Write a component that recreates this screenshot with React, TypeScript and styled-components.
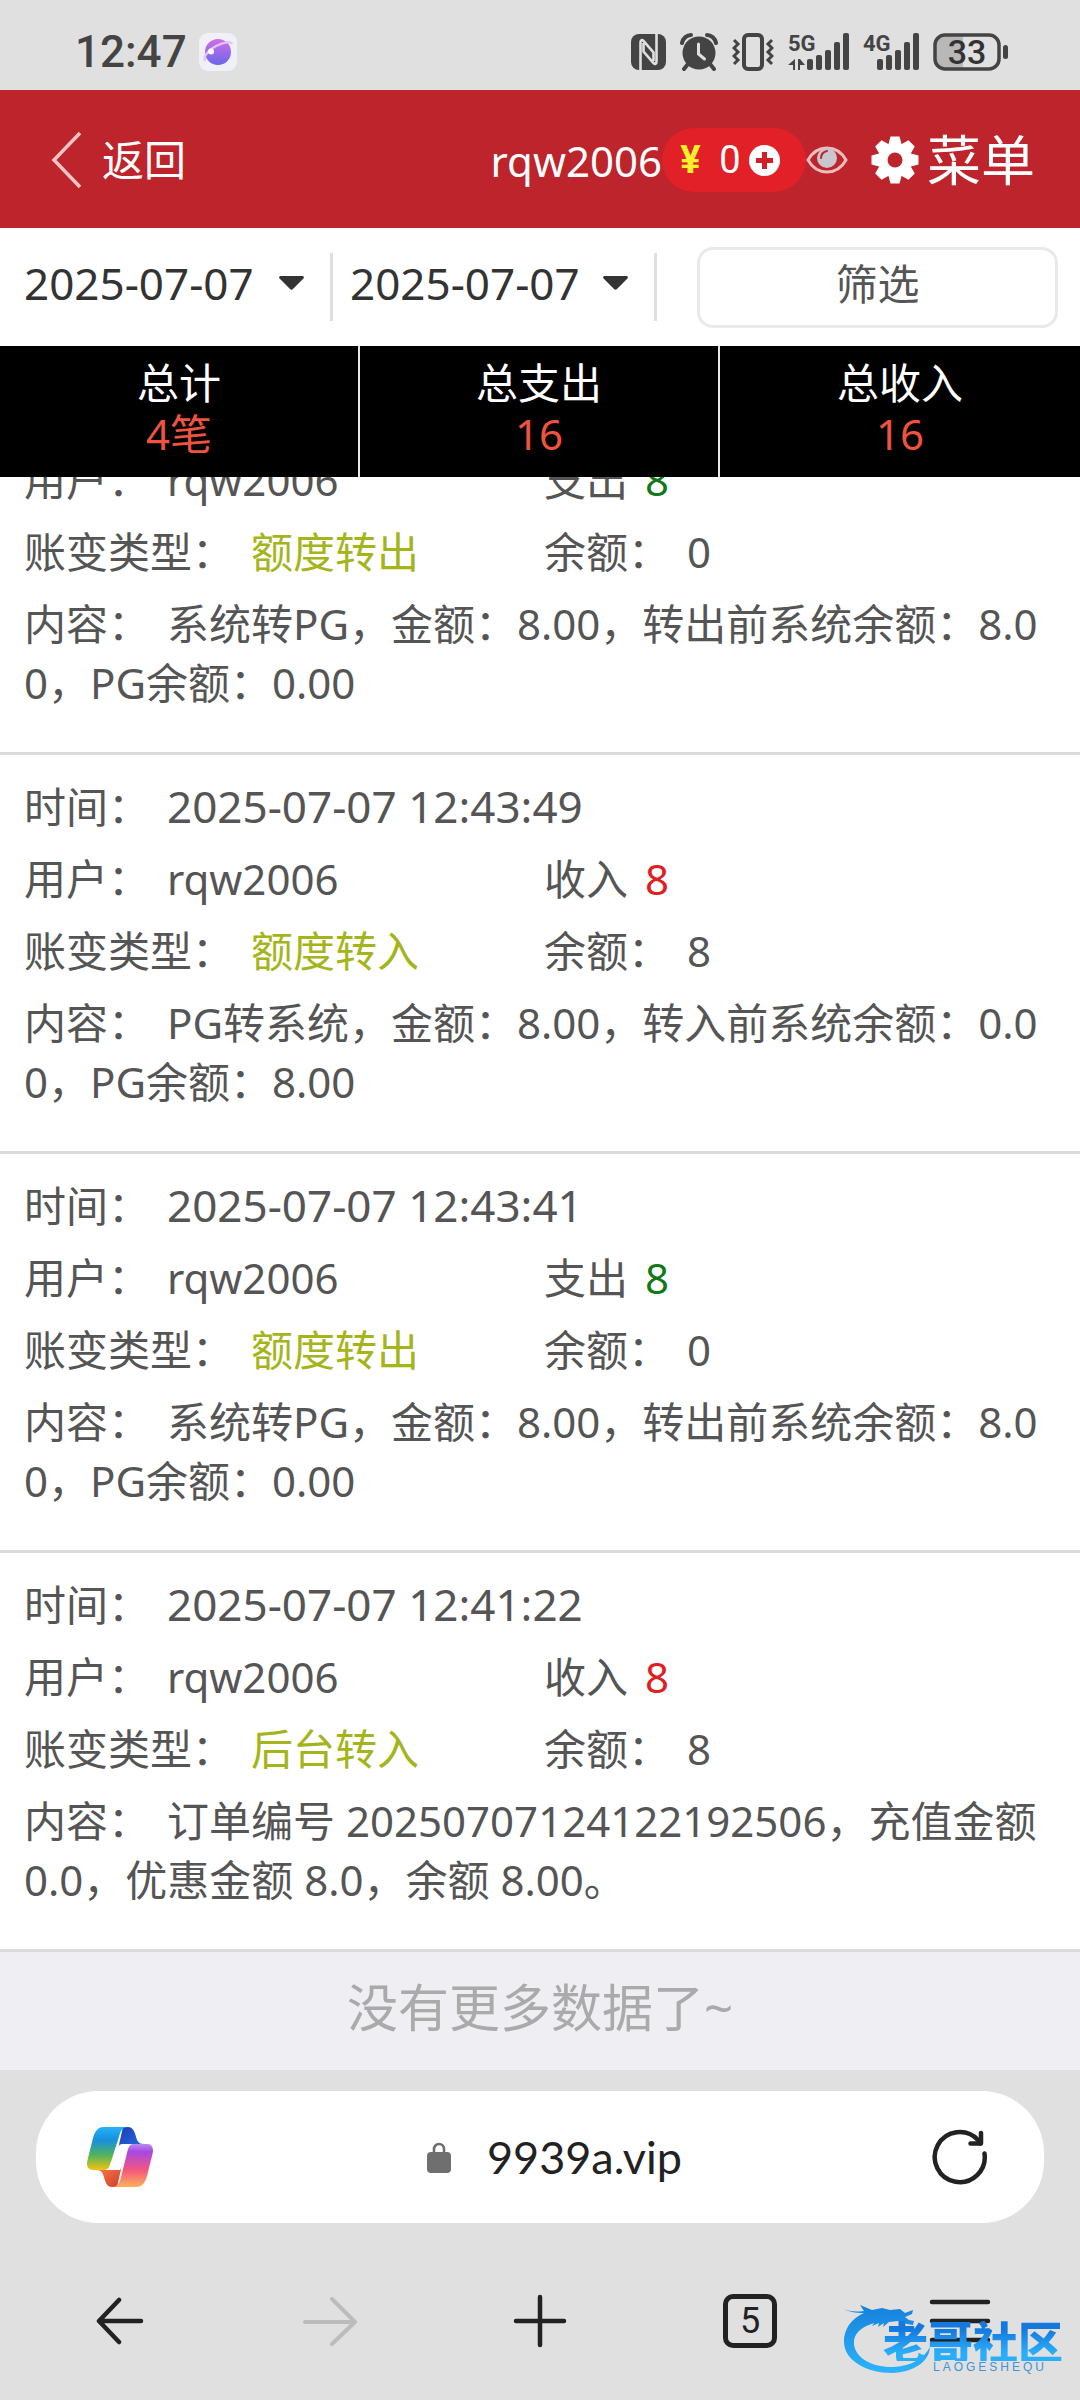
import React, { useLayoutEffect, useRef } from "react";
import styled, { createGlobalStyle } from "styled-components";

const GlobalStyle = createGlobalStyle`
  *, *::before, *::after { box-sizing: border-box; }
  body {
    margin: 0;
    background: #e0e0e0;
    font-family: "Noto Sans", "Noto Sans CJK SC", sans-serif;
    font-size: 42px;
    color: #555;
  }
  button, select, input { font: inherit; color: inherit; }
  button { border: 0; background: none; padding: 0; cursor: pointer; }
`;

const Shell = styled.div`
  display: flex;
  flex-direction: column;
  height: 100vh;
  overflow: hidden;
`;

/* ---------- system status bar ---------- */

const StatusBar = styled.div`
  display: flex;
  align-items: center;
  justify-content: space-between;
  flex: none;
  height: 90px;
  padding: 13px 71px 0 75px;
  color: #444;
  font-family: Roboto, sans-serif;
`;

const StatusGroup = styled.div<{ $gap: number }>`
  display: flex;
  align-items: center;
  gap: ${(p) => p.$gap}px;
`;

const Clock = styled.span`
  font-size: 44px;
  font-weight: 500;
  line-height: 48px;
`;

/* ---------- site header ---------- */

const Header = styled.header`
  display: flex;
  align-items: center;
  justify-content: space-between;
  flex: none;
  height: 138px;
  padding: 2px 45px 0 51px;
  background: #bd242b;
  color: #fff;
`;

const BackButton = styled.button`
  display: flex;
  align-items: center;
  gap: 20px;
  line-height: 60px;
`;

const Account = styled.div`
  display: flex;
  align-items: center;
`;

const Wallet = styled.button`
  display: flex;
  align-items: center;
  height: 64px;
  padding: 0 26px 0 8px;
  border-radius: 32px;
  background: #e12027;
  font-family: Roboto, sans-serif;
  font-size: 38px;
`;

const Yen = styled.span`
  width: 41px;
  color: #fff02e;
  font-weight: 700;
  text-align: center;
`;

const Balance = styled.span`
  width: 38px;
  text-align: center;
`;

const MenuButton = styled.button`
  display: flex;
  align-items: center;
  gap: 8px;
  margin-left: 23px;
  font-size: 54px;
  line-height: 64px;
`;

/* ---------- filters ---------- */

const Filters = styled.form`
  display: grid;
  grid-template-columns: 309fr 324fr 401fr;
  align-items: center;
  flex: none;
  height: 118px;
  padding: 0 22px 0 24px;
  background: #fff;
  color: #333;
`;

const DateField = styled.label<{ $inset: number }>`
  display: flex;
  align-items: center;
  height: 68px;
  padding: 0 26px 8px ${(p) => p.$inset}px;
  border-right: 3px solid #dfdfdf;
`;

const DateSelect = styled.select`
  flex: 1;
  min-width: 0;
  height: 60px;
  padding: 0;
  border: 0;
  background: transparent;
  appearance: none;
  font-size: 44px;
`;

const FilterButton = styled.button`
  height: 81px;
  margin-left: 40px;
  padding-bottom: 12px;
  border: 3px solid #e9e9e9;
  border-radius: 16px;
  background: #fff;
  color: #555;
`;

/* ---------- totals ---------- */

const Totals = styled.dl`
  display: grid;
  grid-template-columns: repeat(3, 1fr);
  flex: none;
  margin: 0;
  background: #000;
  text-align: center;
  line-height: 51px;
`;

const Total = styled.div`
  padding: 11px 0 18px;
  &:not(:last-child) { border-right: 2px solid #e8e8e8; }
`;

const TotalName = styled.dt`
  color: #fff;
`;

const TotalValue = styled.dd`
  margin: 0;
  color: #ee5340;
`;

/* ---------- records ---------- */

const ListArea = styled.main`
  flex: 1;
  min-height: 0;
  overflow-y: auto;
  scrollbar-width: none;
  background: #eeeef3;
  line-height: 59px;
`;

const Record = styled.article`
  display: flex;
  flex-direction: column;
  gap: 13px;
  padding: 22px 24px 40px;
  border-bottom: 3px solid #dcdcdc;
  background: #fff;
`;

const Row = styled.div`
  display: grid;
  grid-template-columns: 520fr 512fr;
`;

const Line = styled.div<{ $breakAll?: boolean }>`
  word-break: ${(p) => (p.$breakAll ? "break-all" : "normal")};
`;

const Label = styled.span`
  margin-right: 17px;
`;

const Stamp = styled.time`
  font-size: 44px;
`;

const Kind = styled.span`
  color: #a4b51c;
`;

const Amount = styled.span<{ $income: boolean }>`
  color: ${(p) => (p.$income ? "#e0201f" : "#12781a")};
`;

const EndNote = styled.p`
  margin: 0;
  padding: 25px 0 33px;
  color: #aaa;
  font-size: 51px;
  line-height: 60px;
  text-align: center;
`;

/* ---------- browser chrome ---------- */

const BrowserBar = styled.footer`
  position: relative;
  flex: none;
  padding: 21px 0 29px;
  background: #e0e0e0;
  color: #222;
`;

const AddressBar = styled.div`
  display: flex;
  align-items: center;
  justify-content: space-between;
  height: 132px;
  margin: 0 36px 48px;
  padding: 0 56px 0 51px;
  border-radius: 62px;
  background: #fff;
`;

const Address = styled.button`
  display: flex;
  align-items: center;
  gap: 36px;
  padding-left: 24px;
  font-family: Lato, sans-serif;
  font-size: 45px;
  line-height: 60px;
`;

const IconButton = styled.button`
  display: flex;
  align-items: center;
  justify-content: center;
  color: inherit;
  &:disabled { color: #bcbcbc; cursor: default; }
`;

const NavRow = styled.nav`
  display: grid;
  grid-template-columns: repeat(5, 1fr);
  height: 100px;
  padding: 0 15px;
`;

const TabCount = styled.span`
  display: flex;
  align-items: center;
  justify-content: center;
  width: 54px;
  height: 54px;
  border: 5px solid #222;
  border-radius: 10px;
  font-family: Roboto, sans-serif;
  font-size: 36px;
`;

const Watermark = styled.div`
  position: absolute;
  right: 0;
  bottom: 20px;
  width: 250px;
  height: 90px;
  pointer-events: none;
  svg { position: absolute; left: 0; top: 0; }
`;

const WatermarkText = styled.div`
  position: relative;
  display: flex;
  flex-direction: column;
  align-items: flex-end;
  padding: 31px 17px 0 0;
`;

const WatermarkName = styled.strong`
  background: linear-gradient(#1478dd 20%, #2aaefa 80%);
  background-clip: text;
  color: transparent;
  font-family: "Noto Sans CJK SC", sans-serif;
  font-size: 45px;
  font-weight: 900;
  line-height: 40px;
`;

const WatermarkLatin = styled.small`
  margin-right: 16px;
  color: #3f93d6;
  font-family: "Liberation Sans", sans-serif;
  font-size: 12px;
  letter-spacing: 3px;
  line-height: 12px;
`;

/* ---------- drawings ---------- */

const PlanetIcon = () => (
  <svg width="38" height="38" viewBox="0 0 38 38" aria-hidden="true">
    <defs>
      <linearGradient id="planet" x1="0" y1="0" x2="0" y2="1">
        <stop offset="0" stopColor="#cf6fe6" />
        <stop offset="1" stopColor="#6a67ea" />
      </linearGradient>
    </defs>
    <rect width="38" height="38" rx="9" fill="#f0f1f8" />
    <circle cx="19" cy="19" r="13" fill="url(#planet)" />
    <path d="M6 28c-2-4 3-11 11-15s15-5 16-2" fill="none" stroke="#e3c4f5" strokeWidth="2.4" />
    <circle cx="12" cy="18.500" r="3" fill="#fff" />
  </svg>
);

const NfcIcon = () => (
  <svg width="35" height="36" viewBox="0 0 35 36" aria-hidden="true">
    <rect width="35" height="36" rx="8" fill="#444" />
    <path d="M9.500 36V8.500c0-2.500 1.500-3 3-1.500l10 11.500V27M25.500 0v27.500c0 2.500-1.500 3-3 1.500l-10-11.500V9" fill="none" stroke="#e0e0e0" strokeWidth="2.600" />
  </svg>
);

const AlarmIcon = () => (
  <svg width="38" height="38" viewBox="0 0 38 38" aria-hidden="true">
    <circle cx="19" cy="20" r="16.500" fill="#444" />
    <path d="M2 10C3 5 7 2 11 2M36 10C35 5 31 2 27 2" fill="none" stroke="#444" strokeWidth="4" strokeLinecap="round" />
    <path d="M8 31l-4 5M30 31l4 5" stroke="#444" strokeWidth="4" strokeLinecap="round" />
    <path d="M18.500 11v10l6 5" fill="none" stroke="#e0e0e0" strokeWidth="3" strokeLinecap="round" />
  </svg>
);

const VibrateIcon = () => (
  <svg width="42" height="38" viewBox="0 0 42 38" fill="none" stroke="#444" aria-hidden="true">
    <rect x="12" y="2" width="18" height="34" rx="4" strokeWidth="4" />
    <path d="M2 7l4 4-4 4 4 4-4 4 4 4-4 4M40 7l-4 4 4 4-4 4 4 4-4 4 4 4" strokeWidth="3" />
  </svg>
);

const SignalIcon = ({ label, data }: { label: string; data?: boolean }) => {
  const start = data ? 19 : 14;
  return (
    <svg width={start + 42} height="40" viewBox={`0 0 ${start + 42} 40`} fill="#444" role="img" aria-label={label}>
      <text x="0" y="19" fontFamily="Roboto, sans-serif" fontSize="22" fontWeight="700">{label}</text>
      {data && <path d="M7 27v11H5v-5H0zM10 38V27h2l5 6h-5v5z" />}
      {[11, 15, 20, 28, 37].map((h, i) => (
        <rect key={h} x={start + i * 9} y={38 - h} width="6" height={h} rx="2" />
      ))}
    </svg>
  );
};

const BatteryIcon = () => (
  <svg width="76" height="38" viewBox="0 0 76 38" role="img" aria-label="33%">
    <path d="M12 3h18v32H12a9 9 0 0 1-9-9V12a9 9 0 0 1 9-9z" fill="#b8b8b8" />
    <rect x="2" y="2" width="64" height="34" rx="10" fill="none" stroke="#444" strokeWidth="3.500" />
    <rect x="70" y="12" width="5" height="14" rx="2.500" fill="#444" />
    <text x="34" y="31" textAnchor="middle" fontFamily="Roboto, sans-serif" fontSize="34" fontWeight="500" fill="#333">33</text>
  </svg>
);

const ChevronIcon = () => (
  <svg width="31" height="58" viewBox="0 0 31 58" fill="none" stroke="#f6c3c4" strokeWidth="3.500" aria-hidden="true">
    <path d="M29 2L3 29l26 27" />
  </svg>
);

const PlusBadge = () => (
  <svg width="31" height="31" viewBox="0 0 31 31" aria-hidden="true">
    <circle cx="15.500" cy="15.500" r="15.500" fill="#fff" />
    <path d="M15.500 7v17M7 15.500h17" stroke="#d21f26" strokeWidth="5" />
  </svg>
);

const EyeIcon = () => (
  <svg width="42" height="30" viewBox="0 0 42 30" aria-hidden="true">
    <path d="M2 15C11-1 31-1 40 15 31 31 11 31 2 15z" fill="none" stroke="#f3bcbf" strokeWidth="3" />
    <circle cx="21" cy="13" r="10" fill="#c9c6cd" />
    <path d="M15 13c0-4 2-6 6-7" fill="none" stroke="#bd242b" strokeWidth="2" strokeLinecap="round" />
  </svg>
);

const GearIcon = () => (
  <svg width="48" height="48" viewBox="-24 -24 48 48" aria-hidden="true">
    {[0, 45, 90, 135].map((a) => (
      <path key={a} d="M-6.500-16L-4.500-23.500H4.500L6.500-16V16L4.500 23.500H-4.500L-6.500 16z" fill="#fff" transform={`rotate(${a})`} />
    ))}
    <circle r="16.500" fill="#fff" />
    <circle r="7.500" fill="#bd242b" />
  </svg>
);

const CaretIcon = () => (
  <svg width="25" height="14" viewBox="0 0 25 14" aria-hidden="true">
    <path d="M2 0h21c2 0 2.500 1.500 1.200 2.800L14 13c-1 1-2 1-3 0L.8 2.800C-.5 1.500 0 0 2 0z" fill="#333" />
  </svg>
);

const CopilotIcon = () => (
  <svg width="66" height="60" viewBox="0 0 66 60" aria-hidden="true">
    <defs>
      <linearGradient id="ribbonA" x1="0" y1="0" x2="0" y2="1">
        <stop offset="0" stopColor="#25b4f4" />
        <stop offset=".3" stopColor="#168fe0" />
        <stop offset=".65" stopColor="#4fb35f" />
        <stop offset="1" stopColor="#f3c40c" />
      </linearGradient>
      <linearGradient id="ribbonB" x1="0" y1="0" x2="0" y2="1">
        <stop offset="0" stopColor="#b98af0" />
        <stop offset=".18" stopColor="#a847e2" />
        <stop offset=".6" stopColor="#f3567f" />
        <stop offset="1" stopColor="#ffb05a" />
      </linearGradient>
      <linearGradient id="foldA" x1="0" y1="0" x2="1" y2="1">
        <stop offset="0" stopColor="#1a3db0" />
        <stop offset="1" stopColor="#2c6fe6" />
      </linearGradient>
      <linearGradient id="foldB" x1="0" y1="0" x2="1" y2="1">
        <stop offset="0" stopColor="#ff8048" />
        <stop offset="1" stopColor="#cf3d2b" />
      </linearGradient>
    </defs>
    <path d="M36 0h5c4 0 6 3 7.500 8 1.500 6 3 9 8.500 9H40c-5 0-7 1-9 5z" fill="url(#foldA)" />
    <path d="M30 60h-5c-4 0-6-3-7.500-8-1.500-6-3-9-8.500-9h17c5 0 7-1 9-5z" fill="url(#foldB)" />
    <path d="M16 0h25c-5 0-7 3-8.500 8L23 38c-1.500 4-3 5-6 5H6c-5 0-7-4-5.500-10L6 11C8 4 11 0 16 0z" fill="url(#ribbonA)" />
    <path d="M23 38L31 20c1-2 2-3 5-3h13L33 43H17c3 0 5-1 6-5z" fill="#fff" />
    <path d="M50 60H25c5 0 7-3 8.500-8L41 22c1.500-4 3-5 6-5h13c5 0 7 4 5.500 10L60 49c-2 7-5 11-10 11z" fill="url(#ribbonB)" />
  </svg>
);

const LockIcon = () => (
  <svg width="24" height="31" viewBox="0 0 24 31" aria-hidden="true">
    <rect y="10" width="24" height="21" rx="4" fill="#6f6f6f" />
    <path d="M7 11V7a5 5 0 0 1 10 0v4" fill="none" stroke="#6f6f6f" strokeWidth="2.600" />
  </svg>
);

const stroke = {
  fill: "none",
  stroke: "currentColor",
  strokeWidth: 4.5,
  strokeLinecap: "round" as const,
  strokeLinejoin: "round" as const,
  "aria-hidden": true,
};

const ReloadIcon = () => (
  <svg width="56" height="56" viewBox="0 0 56 56" {...stroke}>
    <path d="M52.500 24.500A25 25 0 1 1 46 11l2 3.500" />
    <path d="M49 4v10.500H38.500" />
  </svg>
);

const ArrowLeftIcon = () => (
  <svg width="48" height="48" viewBox="0 0 48 48" {...stroke}>
    <path d="M45 24H3M23 3L3 24l20 21" />
  </svg>
);

const ArrowRightIcon = () => (
  <svg width="54" height="50" viewBox="0 0 54 50" {...stroke} strokeWidth={4}>
    <path d="M2 26h50M29 3l23 23-23 22" />
  </svg>
);

const PlusIcon = () => (
  <svg width="54" height="54" viewBox="0 0 54 54" {...stroke}>
    <path d="M27 3v48M3 27h48" />
  </svg>
);

const MenuIcon = () => (
  <svg width="62" height="46" viewBox="0 0 62 46" {...stroke}>
    <path d="M3 4h56M3 23h56M3 42h56" />
  </svg>
);

const DragonIcon = () => (
  <svg width="120" height="90" viewBox="0 0 120 90" aria-hidden="true">
    <defs>
      <linearGradient id="dragon" x1="0" y1="0" x2="0" y2="1">
        <stop offset="0" stopColor="#1680dc" />
        <stop offset="1" stopColor="#2cb4fb" />
      </linearGradient>
    </defs>
    <path
      fill="url(#dragon)"
      d="M12 18c7 4 14 4 22 3l-4-6 12 5 10-2 8 2 10-1 5 4 8-3-1 4-7 3 4 3 5 1-1 4-6-1-9-3-9 1-6 5 1-4-6 4 1-4-7 3 2-3c-13 4-21 11-20 21 1 14 19 24 40 23 18-1 30-9 36-20-1 15-16 25-38 26-26 0-48-13-48-31 0-16 11-25 20-29-8 0-16-1-22-5z"
    />
  </svg>
);

/* ---------- data ---------- */

interface Entry {
  time?: string;
  income: boolean;
  kind: string;
  balance: string;
  detail: string;
}

const entries: Entry[] = [
  { income: false, kind: "额度转出", balance: "0", detail: "系统转PG，金额：8.00，转出前系统余额：8.00，PG余额：0.00" },
  { time: "2025-07-07 12:43:49", income: true, kind: "额度转入", balance: "8", detail: "PG转系统，金额：8.00，转入前系统余额：0.00，PG余额：8.00" },
  { time: "2025-07-07 12:43:41", income: false, kind: "额度转出", balance: "0", detail: "系统转PG，金额：8.00，转出前系统余额：8.00，PG余额：0.00" },
  { time: "2025-07-07 12:41:22", income: true, kind: "后台转入", balance: "8", detail: "订单编号 20250707124122192506，充值金额 0.0，优惠金额 8.0，余额 8.00。" },
];

const totals = [
  ["总计", "4笔"],
  ["总支出", "16"],
  ["总收入", "16"],
];

const EntryCard = ({ entry }: { entry: Entry }) => (
  <Record>
    {entry.time && (
      <Line>
        <Label>时间：</Label>
        <Stamp>{entry.time}</Stamp>
      </Line>
    )}
    <Row>
      <span><Label>用户：</Label>rqw2006</span>
      <span>
        <Label>{entry.income ? "收入" : "支出"}</Label>
        <Amount $income={entry.income}>8</Amount>
      </span>
    </Row>
    <Row>
      <span><Label>账变类型：</Label><Kind>{entry.kind}</Kind></span>
      <span><Label>余额：</Label>{entry.balance}</span>
    </Row>
    <Line $breakAll>
      <Label>内容：</Label>
      {entry.detail}
    </Line>
  </Record>
);

export default function App() {
  const list = useRef<HTMLElement>(null);

  // The history opens on its oldest entries.
  useLayoutEffect(() => {
    if (list.current) list.current.scrollTop = list.current.scrollHeight;
  }, []);

  return (
    <Shell>
      <GlobalStyle />
      <StatusBar>
        <StatusGroup $gap={12}>
          <Clock>12:47</Clock>
          <PlanetIcon />
        </StatusGroup>
        <StatusGroup $gap={14}>
          <NfcIcon />
          <AlarmIcon />
          <VibrateIcon />
          <SignalIcon label="5G" data />
          <SignalIcon label="4G" />
          <BatteryIcon />
        </StatusGroup>
      </StatusBar>

      <Header>
        <BackButton type="button"><ChevronIcon />返回</BackButton>
        <Account>
          <span>rqw2006</span>
          <Wallet type="button" aria-label="充值">
            <Yen>¥</Yen>
            <Balance>0</Balance>
            <PlusBadge />
          </Wallet>
          <IconButton type="button" aria-label="显示余额"><EyeIcon /></IconButton>
          <MenuButton type="button"><GearIcon />菜单</MenuButton>
        </Account>
      </Header>

      <Filters onSubmit={(e) => e.preventDefault()}>
        <DateField $inset={0}>
          <DateSelect aria-label="开始日期"><option>2025-07-07</option></DateSelect>
          <CaretIcon />
        </DateField>
        <DateField $inset={17}>
          <DateSelect aria-label="结束日期"><option>2025-07-07</option></DateSelect>
          <CaretIcon />
        </DateField>
        <FilterButton type="submit">筛选</FilterButton>
      </Filters>

      <Totals>
        {totals.map(([name, value]) => (
          <Total key={name}>
            <TotalName>{name}</TotalName>
            <TotalValue>{value}</TotalValue>
          </Total>
        ))}
      </Totals>

      <ListArea ref={list}>
        {entries.map((entry, i) => <EntryCard key={i} entry={entry} />)}
        <EndNote>没有更多数据了~</EndNote>
      </ListArea>

      <BrowserBar>
        <AddressBar>
          <IconButton type="button" aria-label="Copilot"><CopilotIcon /></IconButton>
          <Address type="button"><LockIcon />9939a.vip</Address>
          <IconButton type="button" aria-label="刷新"><ReloadIcon /></IconButton>
        </AddressBar>
        <NavRow>
          <IconButton type="button" aria-label="后退"><ArrowLeftIcon /></IconButton>
          <IconButton type="button" aria-label="前进" disabled><ArrowRightIcon /></IconButton>
          <IconButton type="button" aria-label="新标签页"><PlusIcon /></IconButton>
          <IconButton type="button" aria-label="标签页"><TabCount>5</TabCount></IconButton>
          <IconButton type="button" aria-label="菜单"><MenuIcon /></IconButton>
        </NavRow>
        <Watermark>
          <DragonIcon />
          <WatermarkText>
            <WatermarkName>老哥社区</WatermarkName>
            <WatermarkLatin>LAOGESHEQU</WatermarkLatin>
          </WatermarkText>
        </Watermark>
      </BrowserBar>
    </Shell>
  );
}
